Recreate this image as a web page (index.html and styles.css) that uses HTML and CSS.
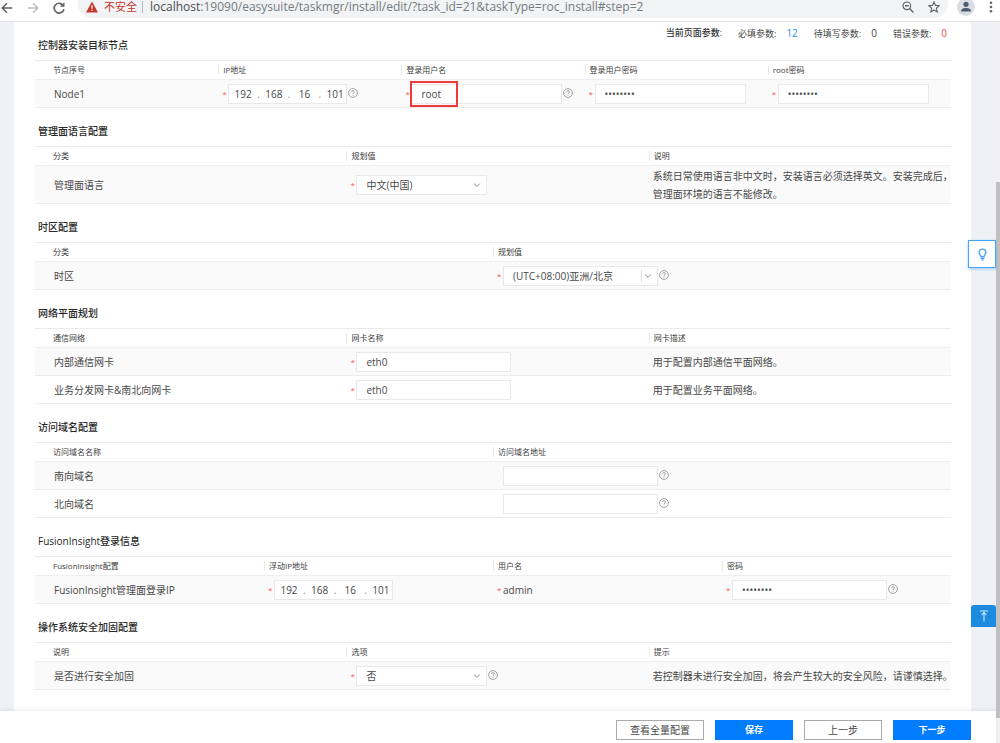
FILE: index.html
```html
<!DOCTYPE html>
<html lang="zh-CN">
<head>
<meta charset="utf-8">
<title>EasySuite</title>
<link rel="stylesheet" href="styles.css">
</head>
<body>
<svg class="defs" aria-hidden="true">
  <symbol id="help" viewBox="0 0 10 10"><circle cx="5" cy="5" r="4.4" fill="none" stroke="#999" stroke-width="0.9"/><path d="M3.6 4.1C3.6 3.1 4.2 2.6 5 2.6s1.4.5 1.4 1.3c0 .9-1.4 1-1.4 2.1M5 6.8v.9" fill="none" stroke="#999" stroke-width="0.9"/></symbol>
  <symbol id="chevron" viewBox="0 0 8 8"><path d="M1.2 2.6L4 5.4l2.800-2.800" fill="none" stroke="#888" stroke-width="1"/></symbol>
</svg>

<header class="browser">
  <button class="nav" aria-label="后退"><svg viewBox="0 0 16 16"><path d="M14 8H3M8 2.500L2.500 8 8 13.500" fill="none" stroke="#5f6368" stroke-width="1.700"/></svg></button>
  <button class="nav" aria-label="前进"><svg viewBox="0 0 16 16"><path d="M2 8h11M8 2.500L13.500 8 8 13.500" fill="none" stroke="#b9bcbf" stroke-width="1.700"/></svg></button>
  <button class="nav" aria-label="刷新"><svg viewBox="0 0 16 16"><path d="M13 5.500A5.600 5.600 0 1 0 13.600 9.300" fill="none" stroke="#5f6368" stroke-width="1.900"/><path d="M14.300 1.500v5.200H9z" fill="#5f6368"/></svg></button>
  <div class="address">
    <svg class="warn" viewBox="0 0 12 12"><path d="M6 .5L12 11.500H0z" fill="#c5372c"/><path d="M6 4.200v3.600M6 8.700v1.400" stroke="#fff" stroke-width="1.200"/></svg>
    <span class="insecure">不安全</span>
    <span class="bar"></span>
    <span class="url"><b>localhost</b>:19090/easysuite/taskmgr/install/edit/?task_id=21&amp;taskType=roc_install#step=2</span>
    <button class="tool" aria-label="缩放"><svg viewBox="0 0 12 12"><circle cx="4.800" cy="4.800" r="3.800" fill="none" stroke="#5f6368" stroke-width="1.200"/><path d="M7.600 7.600L11.400 11.400M3 4.800h3.600" stroke="#5f6368" stroke-width="1.400"/></svg></button>
    <button class="tool" aria-label="收藏"><svg viewBox="0 0 12 12"><path d="M6 1l1.500 3.400 3.700.3-2.800 2.500.8 3.700L6 9l-3.200 1.900.8-3.700L.8 4.700l3.700-.3z" fill="none" stroke="#5f6368" stroke-width="1.100"/></svg></button>
  </div>
  <button class="avatar" aria-label="用户"><svg viewBox="0 0 18 18"><circle cx="9" cy="9" r="9" fill="#dadee3"/><circle cx="9" cy="6.300" r="2.600" fill="#4d5b70"/><path d="M4 13.500c0-3 2.500-3.600 5-3.600s5 .6 5 3.600z" fill="#4d5b70"/></svg></button>
  <button class="more" aria-label="菜单"><svg viewBox="0 0 4 12"><g fill="#5f6368"><circle cx="2" cy="1.800" r="1.300"/><circle cx="2" cy="6" r="1.300"/><circle cx="2" cy="10.200" r="1.300"/></g></svg></button>
</header>

<div class="window">
  <div class="page">
    <main class="panel">
      <section>
        <div class="head">
          <h2>控制器安装目标节点</h2>
          <div class="params">
            <strong>当前页面参数:</strong>
            <span class="param">必填参数:<em class="blue">12</em></span>
            <span class="param">待填写参数:<em>0</em></span>
            <span class="param">错误参数:<em class="red">0</em></span>
          </div>
        </div>
        <table class="cols-5">
          <thead><tr><th>节点序号</th><th>IP地址</th><th>登录用户名</th><th>登录用户密码</th><th>root密码</th></tr></thead>
          <tbody><tr>
            <td>Node1</td>
            <td><div class="field"><i>*</i><div class="ip" role="group" aria-label="IP地址"><input value="192" aria-label="IP 1">.<input value="168" aria-label="IP 2">.<input value="16" aria-label="IP 3">.<input value="101" aria-label="IP 4"></div><svg class="help"><use href="#help"/></svg></div></td>
            <td><div class="field"><i>*</i><div class="marked"><input class="text node" value="root" aria-label="登录用户名"></div><svg class="help"><use href="#help"/></svg></div></td>
            <td><div class="field"><i>*</i><input class="text node" type="password" value="password" aria-label="登录用户密码"></div></td>
            <td><div class="field"><i>*</i><input class="text node" type="password" value="password" aria-label="root密码"></div></td>
          </tr></tbody>
        </table>
      </section>

      <section>
        <div class="head"><h2>管理面语言配置</h2></div>
        <table class="cols-3">
          <thead><tr><th>分类</th><th>规划值</th><th>说明</th></tr></thead>
          <tbody><tr class="tall">
            <td>管理面语言</td>
            <td><div class="field"><i>*</i><div class="select"><select aria-label="管理面语言"><option>中文(中国)</option></select><svg><use href="#chevron"/></svg></div></div></td>
            <td class="note">系统日常使用语言非中文时，安装语言必须选择英文。安装完成后，<br>管理面环境的语言不能修改。</td>
          </tr></tbody>
        </table>
      </section>

      <section>
        <div class="head"><h2>时区配置</h2></div>
        <table class="cols-2">
          <thead><tr><th>分类</th><th>规划值</th></tr></thead>
          <tbody><tr>
            <td>时区</td>
            <td><div class="field"><i>*</i><div class="select split"><select aria-label="时区"><option>(UTC+08:00)亚洲/北京</option></select><svg><use href="#chevron"/></svg></div><svg class="help"><use href="#help"/></svg></div></td>
          </tr></tbody>
        </table>
      </section>

      <section>
        <div class="head"><h2>网络平面规划</h2></div>
        <table class="cols-3">
          <thead><tr><th>通信网络</th><th>网卡名称</th><th>网卡描述</th></tr></thead>
          <tbody>
            <tr><td>内部通信网卡</td><td><div class="field"><i>*</i><input class="text" value="eth0" aria-label="内部通信网卡"></div></td><td class="note">用于配置内部通信平面网络。</td></tr>
            <tr><td>业务分发网卡&amp;南北向网卡</td><td><div class="field"><i>*</i><input class="text" value="eth0" aria-label="业务分发网卡&amp;南北向网卡"></div></td><td class="note">用于配置业务平面网络。</td></tr>
          </tbody>
        </table>
      </section>

      <section>
        <div class="head"><h2>访问域名配置</h2></div>
        <table class="cols-2">
          <thead><tr><th>访问域名名称</th><th>访问域名地址</th></tr></thead>
          <tbody>
            <tr><td>南向域名</td><td><div class="field"><i></i><input class="text" aria-label="南向域名"><svg class="help"><use href="#help"/></svg></div></td></tr>
            <tr><td>北向域名</td><td><div class="field"><i></i><input class="text" aria-label="北向域名"><svg class="help"><use href="#help"/></svg></div></td></tr>
          </tbody>
        </table>
      </section>

      <section>
        <div class="head"><h2>FusionInsight登录信息</h2></div>
        <table class="cols-4">
          <thead><tr><th>FusionInsight配置</th><th>浮动IP地址</th><th>用户名</th><th>密码</th></tr></thead>
          <tbody><tr>
            <td>FusionInsight管理面登录IP</td>
            <td><div class="field"><i>*</i><div class="ip" role="group" aria-label="浮动IP地址"><input value="192" aria-label="IP 1">.<input value="168" aria-label="IP 2">.<input value="16" aria-label="IP 3">.<input value="101" aria-label="IP 4"></div></div></td>
            <td><div class="field"><i>*</i>admin</div></td>
            <td><div class="field"><i>*</i><input class="text" type="password" value="password" aria-label="密码"><svg class="help"><use href="#help"/></svg></div></td>
          </tr></tbody>
        </table>
      </section>

      <section>
        <div class="head"><h2>操作系统安全加固配置</h2></div>
        <table class="cols-3">
          <thead><tr><th>说明</th><th>选项</th><th>提示</th></tr></thead>
          <tbody><tr>
            <td>是否进行安全加固</td>
            <td><div class="field"><i>*</i><div class="select"><select aria-label="是否进行安全加固"><option>否</option></select><svg><use href="#chevron"/></svg></div><svg class="help"><use href="#help"/></svg></div></td>
            <td class="note">若控制器未进行安全加固，将会产生较大的安全风险，请谨慎选择。</td>
          </tr></tbody>
        </table>
      </section>
    </main>

    <footer class="actions">
      <button class="btn wide">查看全量配置</button>
      <button class="btn primary">保存</button>
      <button class="btn">上一步</button>
      <button class="btn primary">下一步</button>
    </footer>

    <button class="tip" aria-label="提示"><svg viewBox="0 0 10 14"><path d="M3.300 9.500C3.300 8 1.300 7.200 1.300 4.700a3.700 3.700 0 0 1 7.400 0C8.700 7.200 6.700 8 6.700 9.500z" fill="none" stroke="#4aa3fa" stroke-width="1.500"/><path d="M3 11.300h4M3.800 12.900h2.400" stroke="#4aa3fa" stroke-width="1.500"/></svg></button>
    <button class="to-top" aria-label="返回顶部"><svg viewBox="0 0 10 12"><path d="M1 1h8M5 11.500V2.500M2.800 4.800L5 2.500l2.200 2.300" fill="none" stroke="#d4ecff" stroke-width="1.100"/></svg></button>
  </div>
  <div class="scrollbar"><div class="thumb"></div></div>
</div>
</body>
</html>
```
FILE: styles.css
```css
*, *::before, *::after { box-sizing: border-box; }

body {
  margin: 0;
  height: 100vh;
  display: flex;
  flex-direction: column;
  overflow: hidden;
  background: #fff;
  color: #484848;
  font: 10px/14px "Open Sans", "Noto Sans CJK SC", sans-serif;
}

button, input, select { font: inherit; color: inherit; margin: 0; }
button { padding: 0; border: 0; background: none; }
svg { display: block; }
.defs { position: absolute; width: 0; height: 0; }

/* browser toolbar */
.browser {
  flex: none;
  height: 22px;
  display: flex;
  align-items: flex-start;
  border-bottom: 1px solid #e3e5e8;
}
.nav { width: 26px; height: 15px; }
.nav svg { width: 14px; height: 14px; }
.address {
  flex: 1;
  height: 18px;
  display: flex;
  align-items: center;
  padding: 0 8px 4px;
  border-radius: 0 0 14px 14px;
  background: #f1f3f4;
  font-size: 12px;
  color: #777b80;
  white-space: nowrap;
}
.warn { width: 12px; height: 12px; margin-right: 6px; }
.insecure { color: #c5372c; font-size: 11px; }
.bar { width: 1px; height: 12px; margin: 0 7px 0 5px; background: #bbb; }
.url { flex: 1; }
.url b { font-weight: 400; color: #4a4d51; }
.tool { width: 12px; height: 12px; margin-left: 14px; }
.tool svg { width: 12px; height: 12px; }
.avatar { margin: 0 14px 0 9px; height: 16px; display: flex; align-items: flex-end; }
.avatar svg { width: 18px; height: 18px; }
.more { width: 4px; margin: 1px 7px 0 0; }
.more svg { width: 4px; height: 12px; }

/* page frame */
.window { flex: 1; min-height: 0; display: flex; }
.page {
  flex: 1;
  min-width: 0;
  position: relative;
  display: flex;
  flex-direction: column;
  background: #eff1f6;
}
.panel {
  flex: 1;
  min-height: 0;
  margin: 0 25px 0 14px;
  padding: 0 20px 0 21px;
  background: #fff;
}
.scrollbar { width: 4px; padding-top: 160px; background: #f1f1f1; }
.thumb { height: 536px; background: #c1c1c1; }

/* sections */
.head { display: flex; justify-content: space-between; height: 38px; }
h2 {
  margin: 0;
  padding: 16px 0 0 3px;
  font-size: 10px;
  line-height: 14px;
  font-weight: 500;
  color: #282828;
}
.params { display: flex; gap: 16px; padding: 4px 4px 0 0; font-size: 9px; }
.params strong { font-weight: 500; color: #333; }
.params em { margin-left: 10px; font-size: 10px; font-style: normal; }
.params .blue { color: #2d8cf0; }
.params .red { color: #f04848; }

table { width: 100%; table-layout: fixed; border-spacing: 0; }
.cols-5 th { width: 20%; }
.cols-4 th { width: 25%; }
.cols-3 th { width: 33%; }
.cols-3 th:first-child { width: 34%; }
.cols-2 th { width: 50%; }

th {
  height: 20px;
  position: relative;
  padding: 0 0 0 5px;
  border-top: 1px solid #eaeaea;
  border-bottom: 1px solid #eee;
  font-size: 8px;
  line-height: 12px;
  font-weight: 400;
  text-align: left;
  color: #3c3c3c;
}
th + th::before {
  content: "";
  position: absolute;
  left: 0;
  top: 4px;
  height: 10px;
  border-left: 1px solid #e8e8e8;
}
th:first-child { padding-left: 18px; }

td { height: 28px; padding: 0 0 0 4px; border-bottom: 1px solid #ececec; }
td:first-child { padding-left: 19px; }
tr:nth-child(odd) td { background: #fafafa; }
.tall td { height: 38px; }
.note { line-height: 18px; white-space: nowrap; }

/* form controls */
.field { display: flex; align-items: center; }
.field i { width: 6px; color: #f55; font-style: normal; font-size: 8px; }
.text, .ip, .select select {
  height: 20px;
  border: 1px solid #e9e9e9;
  border-radius: 0;
  background: #fff;
}
.text { width: 155px; padding: 0 9px; }
.text.node { width: 151px; }
.ip { display: flex; align-items: center; width: 119px; color: #888; }
.ip input {
  width: 28px;
  padding: 0;
  border: 0;
  background: none;
  color: #484848;
  text-align: center;
}
.select { position: relative; width: 131px; }
.select select { width: 100%; padding: 0 9px; appearance: none; }
.select svg { position: absolute; right: 6px; top: 6px; width: 8px; height: 8px; pointer-events: none; }
.select.split { width: 155px; }
.split::after {
  content: "";
  position: absolute;
  right: 16px;
  top: 4px;
  height: 12px;
  border-left: 1px solid #ddd;
}
.help { width: 10px; height: 10px; margin: 0 0 2px 1px; }
.marked { position: relative; }
.marked::after {
  content: "";
  position: absolute;
  left: -1px;
  top: -3px;
  width: 48px;
  height: 26px;
  border: 2px solid #f03a3a;
}

/* footer */
.actions {
  flex: none;
  display: flex;
  justify-content: flex-end;
  gap: 11px;
  height: 32px;
  padding: 9px 25px 0 0;
  background: #fff;
  box-shadow: 0 -2px 3px rgba(0, 0, 0, .06);
}
.btn { width: 78px; height: 20px; border: 1px solid #aaa; background: #fff; }
.btn.wide { width: 88px; }
.btn.primary { border-color: #007dff; background: #007dff; color: #fff; font-size: 9px; font-weight: 700; }

/* floating buttons */
.tip, .to-top { position: absolute; display: flex; align-items: center; justify-content: center; }
.tip {
  right: 0;
  top: 218px;
  width: 28px;
  height: 28px;
  border: 1px solid #4aa3fa;
  background: #fff;
  box-shadow: 0 1px 3px rgba(74, 163, 250, .5);
}
.tip svg { width: 9px; height: 13px; }
.to-top {
  right: 0;
  top: 583px;
  width: 25px;
  height: 22px;
  border-radius: 3px 3px 0 0;
  background: #1c8be0;
}
.to-top svg { width: 10px; height: 12px; }
```
